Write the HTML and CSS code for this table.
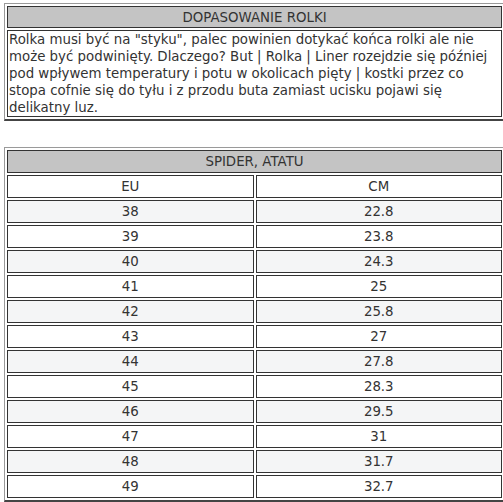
FILE: index.html
```html
<!DOCTYPE html>
<html>
<head>
<meta charset="utf-8">
<link rel="stylesheet" href="styles.css">
</head>
<body>
<table class="tbl info">
<tr><td class="head">DOPASOWANIE ROLKI</td></tr>
<tr><td class="text">Rolka musi być na "styku", palec powinien dotykać końca rolki ale nie może być podwinięty. Dlaczego? But | Rolka | Liner rozejdzie się później pod wpływem temperatury i potu w okolicach pięty | kostki przez co stopa cofnie się do tyłu i z przodu buta zamiast ucisku pojawi się delikatny luz.</td></tr>
</table>
<table class="tbl sizes">
<tr><td class="head" colspan="2">SPIDER, ATATU</td></tr>
<tr><td>EU</td><td>CM</td></tr>
<tr class="alt"><td>38</td><td>22.8</td></tr>
<tr><td>39</td><td>23.8</td></tr>
<tr class="alt"><td>40</td><td>24.3</td></tr>
<tr><td>41</td><td>25</td></tr>
<tr class="alt"><td>42</td><td>25.8</td></tr>
<tr><td>43</td><td>27</td></tr>
<tr class="alt"><td>44</td><td>27.8</td></tr>
<tr><td>45</td><td>28.3</td></tr>
<tr class="alt"><td>46</td><td>29.5</td></tr>
<tr><td>47</td><td>31</td></tr>
<tr class="alt"><td>48</td><td>31.7</td></tr>
<tr><td>49</td><td>32.7</td></tr>
</table>
</body>
</html>
```
FILE: styles.css
```css
html, body { margin: 0; padding: 0; background: #fff; }
body {
  padding: 3px 0 0 4px;
  font-family: "DejaVu Sans", Verdana, sans-serif;
  font-size: 13.35px;
  color: #333;
}
.tbl {
  width: 502px;
  border-collapse: separate;
  border-spacing: 2px;
  border-style: solid;
  border-width: 1px 2px 2px 1px;
  border-color: #9a9a9a #444 #444 #9a9a9a;
}
.tbl td {
  border: 1px solid #333;
  padding: 0 1px;
}
.head {
  background: #c4c4c4;
  text-align: center;
  height: 20px;
}
.info .text {
  line-height: 17px;
  padding: 0 1px;
}
.sizes { margin-top: 26px; }
.sizes td { text-align: center; height: 21px; width: 50%; }
.sizes .head { height: 21px; }
.sizes tr.alt td { background: #f4f5f6; }
```
